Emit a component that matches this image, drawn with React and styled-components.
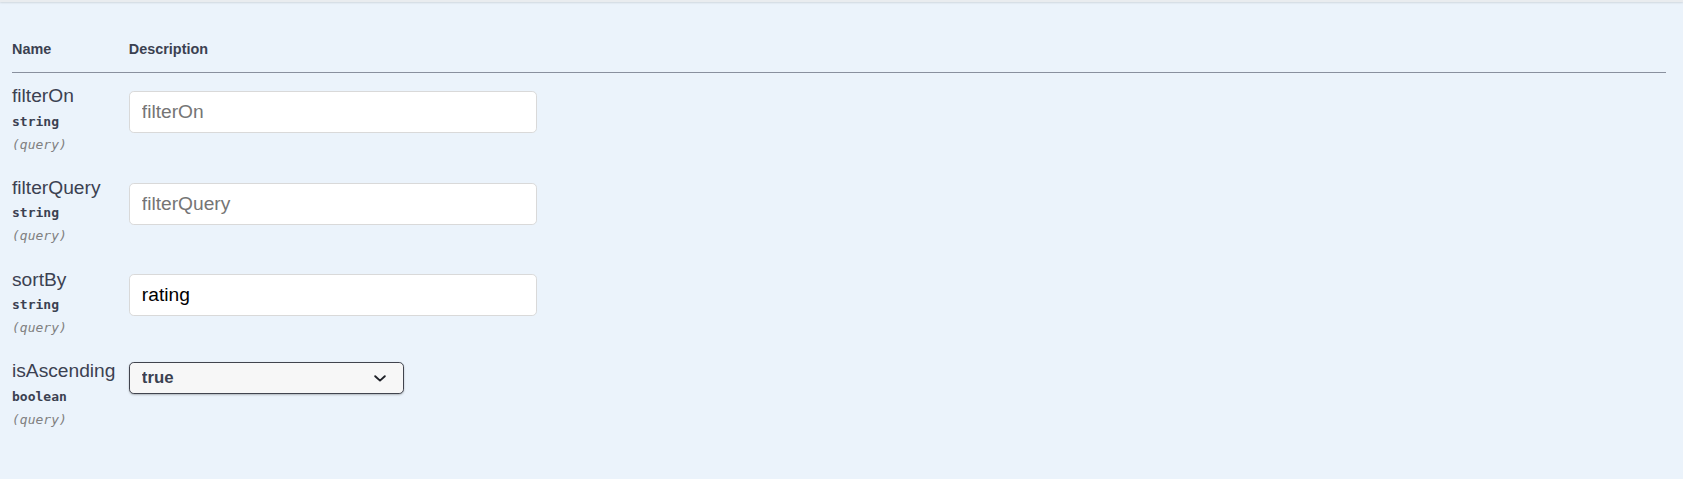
import React from "react";
import styled, { createGlobalStyle } from "styled-components";

const Global = createGlobalStyle`
  html, body { margin: 0; padding: 0; background: #ebf3fb; }
  body { font-family: "Liberation Sans", Arial, sans-serif; color: #3b4151; }
`;

const Page = styled.div`
  min-height: 479px;
  background: #ebf3fb;
`;

const HeaderShade = styled.div`
  height: 2px;
  background: #e9ecef;
  box-shadow: 0 1px 2px rgba(0, 0, 0, 0.12);
`;

const Container = styled.div`
  padding: 25px 17px 24px 12px;
`;

const Table = styled.table`
  width: 100%;
  border-collapse: collapse;
  border-spacing: 0;
`;

const Th = styled.th`
  padding: 14.4px 0;
  font-size: 14.4px;
  font-weight: 700;
  text-align: left;
  color: #3b4151;
  line-height: normal;
  border-bottom: 1px solid rgba(59, 65, 81, 0.33);
  width: ${(p) => (p.$wide ? "99%" : "auto")};
`;

const NameCell = styled.td`
  vertical-align: top;
  padding: 12.3px 0 12px 0;
`;

const DescCell = styled.td`
  vertical-align: top;
  padding: 12px 0 0 0;
  width: 99%;
`;

const ParamName = styled.div`
  font-size: 19.2px;
  line-height: 21.5px;
  margin-right: 13.4px;
  white-space: nowrap;
  color: #3b4151;
`;

const ParamType = styled.div`
  font-family: "DejaVu Sans Mono", "Liberation Mono", monospace;
  font-size: 13px;
  font-weight: 700;
  line-height: 17px;
  padding: 6px 0;
  color: #3b4151;
`;

const ParamIn = styled.div`
  font-family: "DejaVu Sans Mono", "Liberation Mono", monospace;
  font-size: 13px;
  font-style: italic;
  line-height: 17px;
  color: #808080;
`;

const TextInput = styled.input`
  display: block;
  box-sizing: border-box;
  width: 408px;
  height: 42px;
  margin: 6px 0;
  padding: 0 12px;
  border: 1px solid #d9d9d9;
  border-radius: 4.8px;
  background: #fff;
  font-family: "Liberation Sans", Arial, sans-serif;
  font-size: 19.2px;
  color: #000;
  outline: none;
  &::placeholder { color: #757575; opacity: 1; }
`;

const SelectWrap = styled.div`
  position: relative;
  width: 275px;
  margin-top: 1.5px;
`;

const Select = styled.select`
  display: block;
  box-sizing: border-box;
  width: 275px;
  height: 32px;
  padding: 0 48px 0 12px;
  border: 1px solid #41444e;
  border-radius: 4.8px;
  box-shadow: 0 1px 2px 0 rgba(0, 0, 0, 0.25);
  background: #f7f7f7;
  appearance: none;
  -webkit-appearance: none;
  font-family: "Liberation Sans", Arial, sans-serif;
  font-size: 16.8px;
  font-weight: 700;
  color: #3b4151;
  outline: none;
`;

const Chevron = styled.svg`
  position: absolute;
  right: 18px;
  top: 13px;
  pointer-events: none;
`;

const params = [
  { name: "filterOn", type: "string", kind: "text", placeholder: "filterOn", value: "" },
  { name: "filterQuery", type: "string", kind: "text", placeholder: "filterQuery", value: "" },
  { name: "sortBy", type: "string", kind: "text", placeholder: "sortBy", value: "rating" },
  { name: "isAscending", type: "boolean", kind: "select", value: "true" },
];

export default function App() {
  return (
    <Page>
      <Global />
      <HeaderShade />
      <Container>
        <Table>
          <thead>
            <tr>
              <Th>Name</Th>
              <Th $wide>Description</Th>
            </tr>
          </thead>
          <tbody>
            {params.map((p) => (
              <tr key={p.name}>
                <NameCell>
                  <ParamName>{p.name}</ParamName>
                  <ParamType>{p.type}</ParamType>
                  <ParamIn>(query)</ParamIn>
                </NameCell>
                <DescCell>
                  {p.kind === "text" ? (
                    <TextInput
                      type="text"
                      placeholder={p.placeholder}
                      defaultValue={p.value}
                    />
                  ) : (
                    <SelectWrap>
                      <Select defaultValue={p.value}>
                        <option value="--">--</option>
                        <option value="true">true</option>
                        <option value="false">false</option>
                      </Select>
                      <Chevron width="12" height="7" viewBox="0 0 12 7">
                        <path
                          d="M1.2 1.2 L6 5.6 L10.8 1.2"
                          fill="none"
                          stroke="#1f2128"
                          strokeWidth="1.9"
                          strokeLinecap="round"
                          strokeLinejoin="round"
                        />
                      </Chevron>
                    </SelectWrap>
                  )}
                </DescCell>
              </tr>
            ))}
          </tbody>
        </Table>
      </Container>
    </Page>
  );
}
